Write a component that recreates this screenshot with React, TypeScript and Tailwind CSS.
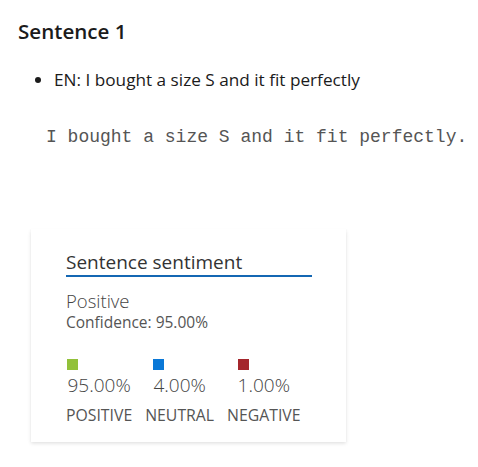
import React from "react";

export default function App() {
  return (
    <div className="bg-white w-[478px] h-[467px] overflow-hidden font-['Open_Sans',sans-serif] text-[#242424]">
      <h2 className="pl-[18px] pt-[18px] text-[20.6px] leading-[26px] font-semibold text-[#1b1b1b]">Sentence 1</h2>
      <ul className="list-disc pl-[54px] mt-[24px] text-[17.2px] leading-[24px] text-[#1b1b1b]">
        <li>EN: I bought a size S and it fit perfectly</li>
      </ul>
      <pre className="ml-[46px] mt-[33px] font-['Liberation_Mono',monospace] text-[18px] leading-[24px] text-[#555555]">I bought a size S and it fit perfectly.</pre>
      <div className="ml-[31px] mt-[80px] w-[315px] h-[213px] bg-white shadow-[0_1.6px_3.6px_rgba(0,0,0,0.13),0_0.3px_0.9px_rgba(0,0,0,0.11)] pl-[35px] pt-[21px]">
        <div className="w-[246px] border-b-[2px] border-[#1467b3] text-[19px] leading-[24px] pb-[1px] text-[#333333]">Sentence sentiment</div>
        <div className="mt-[13px] text-[18.5px] leading-[22px] font-light text-[#444444]">Positive</div>
        <div className="text-[15.5px] leading-[21px] text-[#555555]">Confidence: 95.00%</div>
        <div className="mt-[26px] flex gap-[13px] text-[#444444]">
          {[
            { c: "bg-[#92c13a]", v: "95.00%", l: "POSITIVE" },
            { c: "bg-[#0a78d7]", v: "4.00%", l: "NEUTRAL" },
            { c: "bg-[#a4262c]", v: "1.00%", l: "NEGATIVE" },
          ].map((it) => (
            <div key={it.l} className="flex flex-col items-center">
              <div className="flex flex-col items-start">
                <div className={`w-[11px] h-[11px] ${it.c}`}></div>
                <div className="mt-[3px] text-[19px] leading-[24px] font-light">{it.v}</div>
              </div>
              <div className="mt-[8px] text-[15.8px] leading-[20px] text-[#555555]">{it.l}</div>
            </div>
          ))}
        </div>
      </div>
    </div>
  );
}
